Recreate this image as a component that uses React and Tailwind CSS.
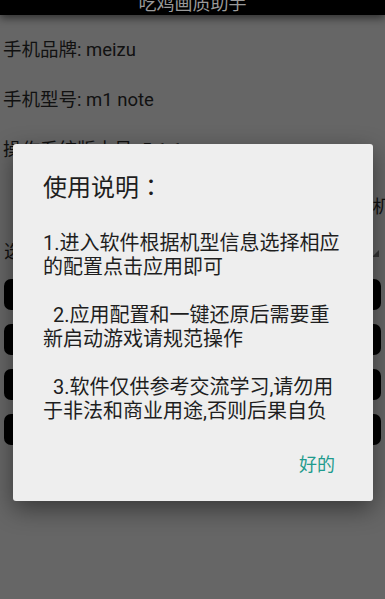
import React from "react";

const lines = [
  "1.进入软件根据机型信息选择相应",
  "的配置点击应用即可",
  "",
  "  2.应用配置和一键还原后需要重",
  "新启动游戏请规范操作",
  "",
  "  3.软件仅供参考交流学习,请勿用",
  "于非法和商业用途,否则后果自负",
];

export default function App() {
  return (
    <div className="relative w-full h-[599px] overflow-hidden bg-[#666666] font-['Roboto','Noto_Sans_CJK_SC',sans-serif] text-[#111]">
      {/* Title bar (cropped) */}
      <div className="h-[15px] overflow-hidden bg-black shadow-[0_3px_8px_rgba(0,0,0,0.55)] relative z-10">
        <div className="-mt-[6px] text-center text-[18px] leading-[20px] text-[#9a9a9a]">吃鸡画质助手</div>
      </div>

      {/* Page content (dimmed) */}
      <div className="pt-[23px] flex flex-col">
        <div className="pl-[3px] flex flex-col gap-[26px] text-[18.5px] leading-[24px]">
          <p>手机品牌: meizu</p>
          <p>手机型号: m1 note</p>
          <p>操作系统版本号: 5.1.1</p>
        </div>
        <div className="mt-[33px] flex justify-end text-[18.5px] leading-[24px] whitespace-nowrap">
          <span className="-mr-[6px]">适配机</span>
        </div>
        <div className="mt-[21px] flex items-end justify-between pl-[4px] pr-[6px] text-[18.5px] leading-[24px]">
          <span>选择画质</span>
          <svg width="7" height="7" viewBox="0 0 7 7" className="mb-[7px]">
            <polygon points="7,0 7,7 0,7" fill="#333" />
          </svg>
        </div>
        <div className="mt-[15px] px-[4px] flex flex-col gap-[14px]">
          {[0, 1, 2, 3].map((i) => (
            <div key={i} className="h-[31px] rounded-[7px] bg-black" />
          ))}
        </div>
      </div>

      {/* Dialog */}
      <div className="absolute left-[13px] top-[144px] w-[360px] h-[357px] rounded-[3px] bg-[#eeeeee] shadow-[0_8px_24px_rgba(0,0,0,0.45)] flex flex-col pl-[30px] pt-[26px] text-[#1e1e1e]">
        <h2 className="text-[24px] leading-[32px]">
          使用说明<span className="font-['Noto_Sans_CJK_TC',sans-serif]">：</span>
        </h2>
        <div className="mt-[27px] text-[20px] leading-[24px] whitespace-pre">
          {lines.map((l, i) => (
            <div key={i} className="h-[24px]">{l}</div>
          ))}
        </div>
        <div className="mt-[23px] flex justify-end pr-[30px]">
          <button className="h-[36px] px-[8px] text-[18px] text-[#1f9b8d]">好的</button>
        </div>
      </div>
    </div>
  );
}
